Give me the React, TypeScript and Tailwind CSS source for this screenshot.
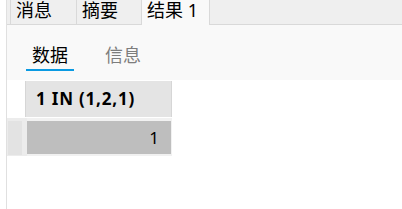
import React from 'react';

const font = { fontFamily: '"Noto Sans", "Noto Sans CJK SC", sans-serif' };

const tabs = [
  { label: '消息', w: 'w-[66px]', active: false },
  { label: '摘要', w: 'w-[65px]', active: false },
  { label: '结果 1', w: 'w-[69px]', active: true },
];

export default function App() {
  return (
    <div className="w-[402px] h-[209px] bg-white flex overflow-hidden" style={font}>
      <div className="w-[6px] shrink-0" />
      <div className="flex-1 border-l border-[#e0e0e0] flex flex-col">
        {/* top tab bar */}
        <div className="h-[25px] bg-[#efefef] border-b border-[#d9d9d9] flex pl-[3px]">
          {tabs.map((t) => (
            <div
              key={t.label}
              className={`${t.w} h-[25px] border-l border-[#d9d9d9] pl-[5px] pt-px text-[18px] leading-[19px] text-black ${
                t.active ? 'bg-[#f9f9f9] border-r' : ''
              }`}
            >
              {t.label}
            </div>
          ))}
        </div>

        {/* sub tabs */}
        <div className="h-[55px] bg-[#f9f9f9] pt-[18px] pl-[19px] flex gap-[25px]">
          <div className="w-[48px] flex flex-col">
            <span className="pl-[6px] h-[24px] leading-[24px] text-[18px] text-black">数据</span>
            <div className="mt-[2px] h-[2px] bg-[#0a9ae2]" />
          </div>
          <div className="w-[48px] flex flex-col">
            <span className="pl-[6px] h-[24px] leading-[24px] text-[18px] text-[#7d7d7d]">信息</span>
          </div>
        </div>

        {/* result grid */}
        <div className="flex-1 bg-white pt-px">
          <div className="flex h-[36px]">
            <div className="w-[18px]" />
            <div className="w-[147px] bg-[#e4e4e4] border-l border-r border-[#d6d6d6] pl-[10px] flex items-center">
              <span className="text-[17px] font-bold text-black tracking-[0.8px]">1 IN (1,2,1)</span>
            </div>
          </div>
          <div className="flex h-[38px] mt-px">
            <div className="w-[20px] bg-[#ececec] pt-[3px] pl-px pb-px">
              <div className="w-[14px] h-full bg-[#e3e3e3]" />
            </div>
            <div className="w-[145px] bg-[#f1f1f1] pt-[3px] pr-px pb-[2px]">
              <div className="h-full bg-[#bebebe] flex items-center justify-end pr-[12px] text-[17px] text-black">
                1
              </div>
            </div>
          </div>
        </div>
      </div>
    </div>
  );
}
